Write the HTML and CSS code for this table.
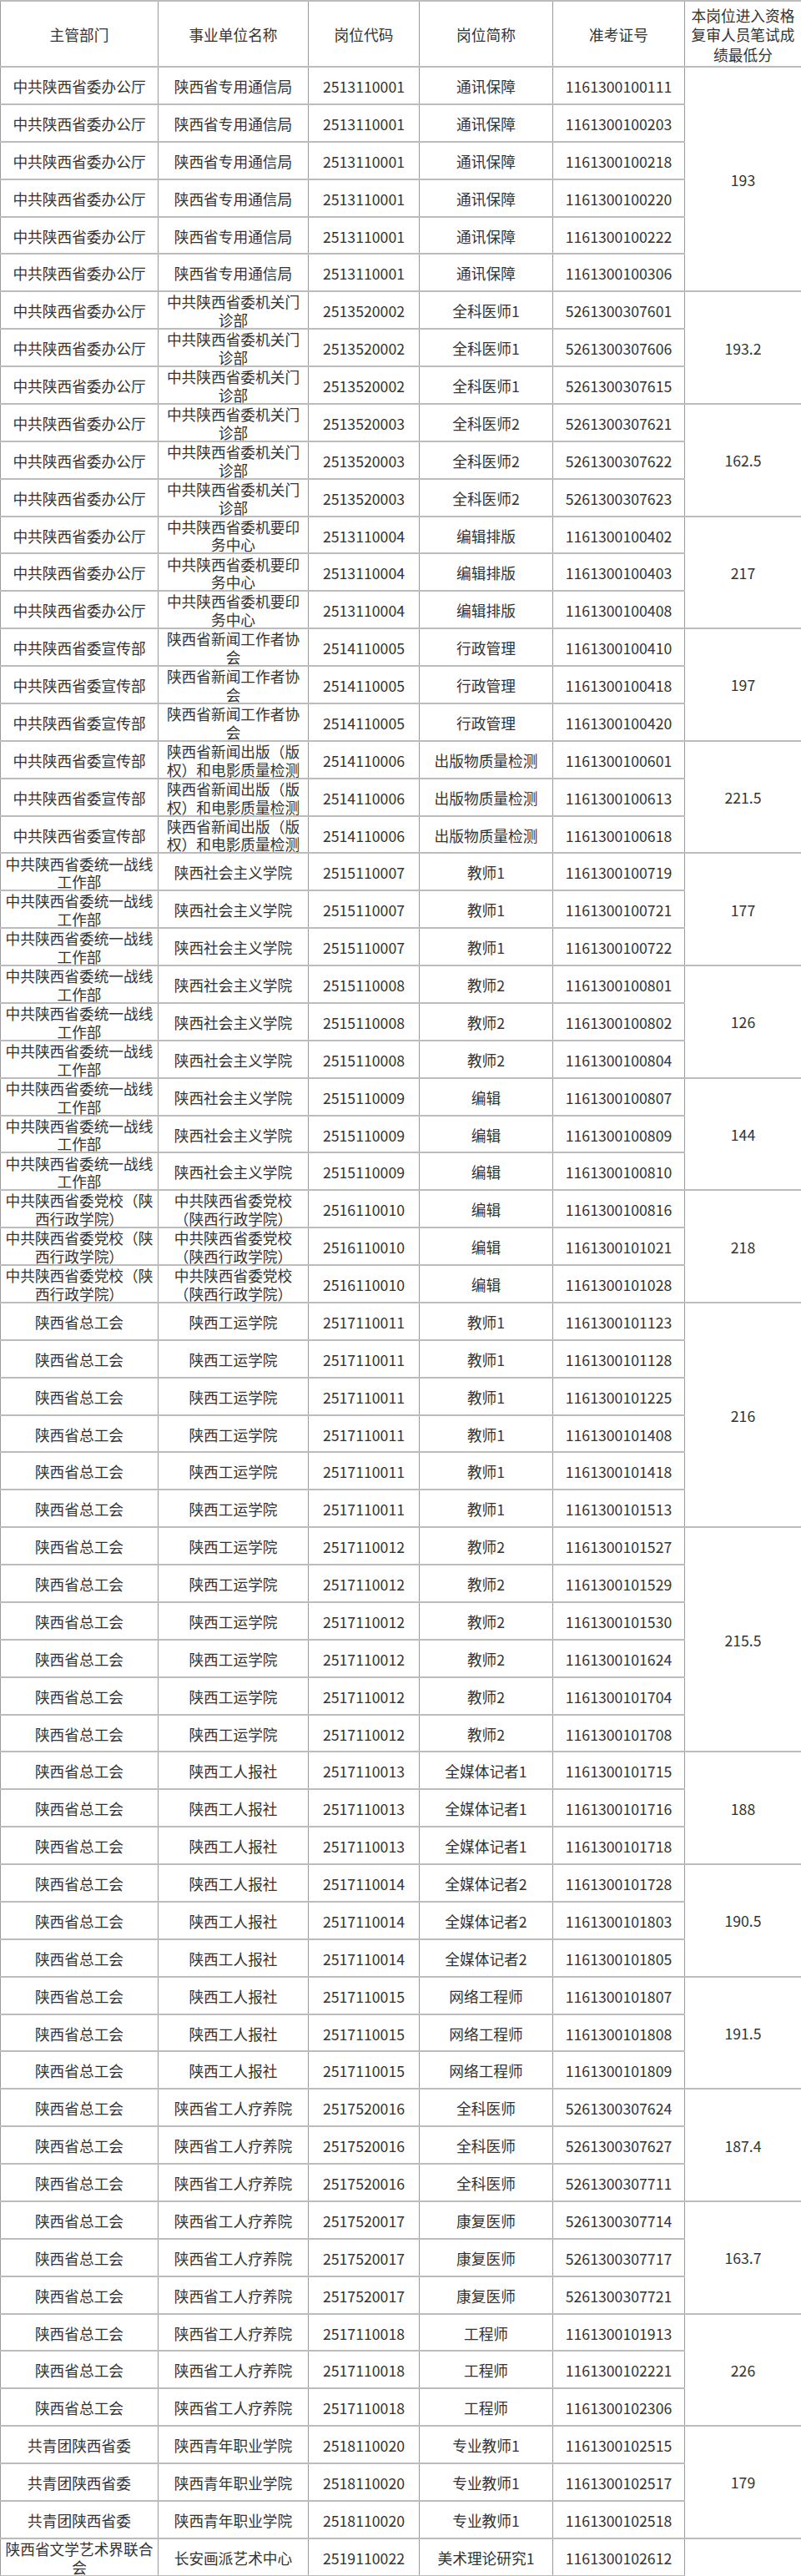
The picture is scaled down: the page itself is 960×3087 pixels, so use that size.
FILE: index.html
```html
<!DOCTYPE html>
<html lang="zh-CN">
<head>
<meta charset="utf-8">
<title>岗位进入资格复审人员笔试成绩最低分</title>
<link rel="stylesheet" href="styles.css">
</head>
<body>
<table class="grid">
<colgroup>
<col class="w1"><col class="w2"><col class="w3"><col class="w4"><col class="w5"><col class="w6">
</colgroup>
<thead>
<tr class="head">
<th><div class="cell">主管部门</div></th>
<th><div class="cell">事业单位名称</div></th>
<th><div class="cell">岗位代码</div></th>
<th><div class="cell">岗位简称</div></th>
<th><div class="cell">准考证号</div></th>
<th><div class="cell">本岗位进入资格复审人员笔试成绩最低分</div></th>
</tr>
</thead>
<tbody>
<tr><td><div class="cell">中共陕西省委办公厅</div></td><td><div class="cell">陕西省专用通信局</div></td><td><div class="cell">2513110001</div></td><td><div class="cell">通讯保障</div></td><td><div class="cell">1161300100111</div></td><td class="score" rowspan="6">193</td></tr>
<tr><td><div class="cell">中共陕西省委办公厅</div></td><td><div class="cell">陕西省专用通信局</div></td><td><div class="cell">2513110001</div></td><td><div class="cell">通讯保障</div></td><td><div class="cell">1161300100203</div></td></tr>
<tr><td><div class="cell">中共陕西省委办公厅</div></td><td><div class="cell">陕西省专用通信局</div></td><td><div class="cell">2513110001</div></td><td><div class="cell">通讯保障</div></td><td><div class="cell">1161300100218</div></td></tr>
<tr><td><div class="cell">中共陕西省委办公厅</div></td><td><div class="cell">陕西省专用通信局</div></td><td><div class="cell">2513110001</div></td><td><div class="cell">通讯保障</div></td><td><div class="cell">1161300100220</div></td></tr>
<tr><td><div class="cell">中共陕西省委办公厅</div></td><td><div class="cell">陕西省专用通信局</div></td><td><div class="cell">2513110001</div></td><td><div class="cell">通讯保障</div></td><td><div class="cell">1161300100222</div></td></tr>
<tr><td><div class="cell">中共陕西省委办公厅</div></td><td><div class="cell">陕西省专用通信局</div></td><td><div class="cell">2513110001</div></td><td><div class="cell">通讯保障</div></td><td><div class="cell">1161300100306</div></td></tr>

<tr><td><div class="cell">中共陕西省委办公厅</div></td><td><div class="cell">中共陕西省委机关门诊部</div></td><td><div class="cell">2513520002</div></td><td><div class="cell">全科医师1</div></td><td><div class="cell">5261300307601</div></td><td class="score" rowspan="3">193.2</td></tr>
<tr><td><div class="cell">中共陕西省委办公厅</div></td><td><div class="cell">中共陕西省委机关门诊部</div></td><td><div class="cell">2513520002</div></td><td><div class="cell">全科医师1</div></td><td><div class="cell">5261300307606</div></td></tr>
<tr><td><div class="cell">中共陕西省委办公厅</div></td><td><div class="cell">中共陕西省委机关门诊部</div></td><td><div class="cell">2513520002</div></td><td><div class="cell">全科医师1</div></td><td><div class="cell">5261300307615</div></td></tr>

<tr><td><div class="cell">中共陕西省委办公厅</div></td><td><div class="cell">中共陕西省委机关门诊部</div></td><td><div class="cell">2513520003</div></td><td><div class="cell">全科医师2</div></td><td><div class="cell">5261300307621</div></td><td class="score" rowspan="3">162.5</td></tr>
<tr><td><div class="cell">中共陕西省委办公厅</div></td><td><div class="cell">中共陕西省委机关门诊部</div></td><td><div class="cell">2513520003</div></td><td><div class="cell">全科医师2</div></td><td><div class="cell">5261300307622</div></td></tr>
<tr><td><div class="cell">中共陕西省委办公厅</div></td><td><div class="cell">中共陕西省委机关门诊部</div></td><td><div class="cell">2513520003</div></td><td><div class="cell">全科医师2</div></td><td><div class="cell">5261300307623</div></td></tr>

<tr><td><div class="cell">中共陕西省委办公厅</div></td><td><div class="cell">中共陕西省委机要印务中心</div></td><td><div class="cell">2513110004</div></td><td><div class="cell">编辑排版</div></td><td><div class="cell">1161300100402</div></td><td class="score" rowspan="3">217</td></tr>
<tr><td><div class="cell">中共陕西省委办公厅</div></td><td><div class="cell">中共陕西省委机要印务中心</div></td><td><div class="cell">2513110004</div></td><td><div class="cell">编辑排版</div></td><td><div class="cell">1161300100403</div></td></tr>
<tr><td><div class="cell">中共陕西省委办公厅</div></td><td><div class="cell">中共陕西省委机要印务中心</div></td><td><div class="cell">2513110004</div></td><td><div class="cell">编辑排版</div></td><td><div class="cell">1161300100408</div></td></tr>

<tr><td><div class="cell">中共陕西省委宣传部</div></td><td><div class="cell">陕西省新闻工作者协会</div></td><td><div class="cell">2514110005</div></td><td><div class="cell">行政管理</div></td><td><div class="cell">1161300100410</div></td><td class="score" rowspan="3">197</td></tr>
<tr><td><div class="cell">中共陕西省委宣传部</div></td><td><div class="cell">陕西省新闻工作者协会</div></td><td><div class="cell">2514110005</div></td><td><div class="cell">行政管理</div></td><td><div class="cell">1161300100418</div></td></tr>
<tr><td><div class="cell">中共陕西省委宣传部</div></td><td><div class="cell">陕西省新闻工作者协会</div></td><td><div class="cell">2514110005</div></td><td><div class="cell">行政管理</div></td><td><div class="cell">1161300100420</div></td></tr>

<tr><td><div class="cell">中共陕西省委宣传部</div></td><td><div class="cell">陕西省新闻出版（版权）和电影质量检测</div></td><td><div class="cell">2514110006</div></td><td><div class="cell">出版物质量检测</div></td><td><div class="cell">1161300100601</div></td><td class="score" rowspan="3">221.5</td></tr>
<tr><td><div class="cell">中共陕西省委宣传部</div></td><td><div class="cell">陕西省新闻出版（版权）和电影质量检测</div></td><td><div class="cell">2514110006</div></td><td><div class="cell">出版物质量检测</div></td><td><div class="cell">1161300100613</div></td></tr>
<tr><td><div class="cell">中共陕西省委宣传部</div></td><td><div class="cell">陕西省新闻出版（版权）和电影质量检测</div></td><td><div class="cell">2514110006</div></td><td><div class="cell">出版物质量检测</div></td><td><div class="cell">1161300100618</div></td></tr>

<tr><td><div class="cell">中共陕西省委统一战线工作部</div></td><td><div class="cell">陕西社会主义学院</div></td><td><div class="cell">2515110007</div></td><td><div class="cell">教师1</div></td><td><div class="cell">1161300100719</div></td><td class="score" rowspan="3">177</td></tr>
<tr><td><div class="cell">中共陕西省委统一战线工作部</div></td><td><div class="cell">陕西社会主义学院</div></td><td><div class="cell">2515110007</div></td><td><div class="cell">教师1</div></td><td><div class="cell">1161300100721</div></td></tr>
<tr><td><div class="cell">中共陕西省委统一战线工作部</div></td><td><div class="cell">陕西社会主义学院</div></td><td><div class="cell">2515110007</div></td><td><div class="cell">教师1</div></td><td><div class="cell">1161300100722</div></td></tr>

<tr><td><div class="cell">中共陕西省委统一战线工作部</div></td><td><div class="cell">陕西社会主义学院</div></td><td><div class="cell">2515110008</div></td><td><div class="cell">教师2</div></td><td><div class="cell">1161300100801</div></td><td class="score" rowspan="3">126</td></tr>
<tr><td><div class="cell">中共陕西省委统一战线工作部</div></td><td><div class="cell">陕西社会主义学院</div></td><td><div class="cell">2515110008</div></td><td><div class="cell">教师2</div></td><td><div class="cell">1161300100802</div></td></tr>
<tr><td><div class="cell">中共陕西省委统一战线工作部</div></td><td><div class="cell">陕西社会主义学院</div></td><td><div class="cell">2515110008</div></td><td><div class="cell">教师2</div></td><td><div class="cell">1161300100804</div></td></tr>

<tr><td><div class="cell">中共陕西省委统一战线工作部</div></td><td><div class="cell">陕西社会主义学院</div></td><td><div class="cell">2515110009</div></td><td><div class="cell">编辑</div></td><td><div class="cell">1161300100807</div></td><td class="score" rowspan="3">144</td></tr>
<tr><td><div class="cell">中共陕西省委统一战线工作部</div></td><td><div class="cell">陕西社会主义学院</div></td><td><div class="cell">2515110009</div></td><td><div class="cell">编辑</div></td><td><div class="cell">1161300100809</div></td></tr>
<tr><td><div class="cell">中共陕西省委统一战线工作部</div></td><td><div class="cell">陕西社会主义学院</div></td><td><div class="cell">2515110009</div></td><td><div class="cell">编辑</div></td><td><div class="cell">1161300100810</div></td></tr>

<tr><td><div class="cell">中共陕西省委党校（陕西行政学院）</div></td><td><div class="cell">中共陕西省委党校（陕西行政学院）</div></td><td><div class="cell">2516110010</div></td><td><div class="cell">编辑</div></td><td><div class="cell">1161300100816</div></td><td class="score" rowspan="3">218</td></tr>
<tr><td><div class="cell">中共陕西省委党校（陕西行政学院）</div></td><td><div class="cell">中共陕西省委党校（陕西行政学院）</div></td><td><div class="cell">2516110010</div></td><td><div class="cell">编辑</div></td><td><div class="cell">1161300101021</div></td></tr>
<tr><td><div class="cell">中共陕西省委党校（陕西行政学院）</div></td><td><div class="cell">中共陕西省委党校（陕西行政学院）</div></td><td><div class="cell">2516110010</div></td><td><div class="cell">编辑</div></td><td><div class="cell">1161300101028</div></td></tr>

<tr><td><div class="cell">陕西省总工会</div></td><td><div class="cell">陕西工运学院</div></td><td><div class="cell">2517110011</div></td><td><div class="cell">教师1</div></td><td><div class="cell">1161300101123</div></td><td class="score" rowspan="6">216</td></tr>
<tr><td><div class="cell">陕西省总工会</div></td><td><div class="cell">陕西工运学院</div></td><td><div class="cell">2517110011</div></td><td><div class="cell">教师1</div></td><td><div class="cell">1161300101128</div></td></tr>
<tr><td><div class="cell">陕西省总工会</div></td><td><div class="cell">陕西工运学院</div></td><td><div class="cell">2517110011</div></td><td><div class="cell">教师1</div></td><td><div class="cell">1161300101225</div></td></tr>
<tr><td><div class="cell">陕西省总工会</div></td><td><div class="cell">陕西工运学院</div></td><td><div class="cell">2517110011</div></td><td><div class="cell">教师1</div></td><td><div class="cell">1161300101408</div></td></tr>
<tr><td><div class="cell">陕西省总工会</div></td><td><div class="cell">陕西工运学院</div></td><td><div class="cell">2517110011</div></td><td><div class="cell">教师1</div></td><td><div class="cell">1161300101418</div></td></tr>
<tr><td><div class="cell">陕西省总工会</div></td><td><div class="cell">陕西工运学院</div></td><td><div class="cell">2517110011</div></td><td><div class="cell">教师1</div></td><td><div class="cell">1161300101513</div></td></tr>

<tr><td><div class="cell">陕西省总工会</div></td><td><div class="cell">陕西工运学院</div></td><td><div class="cell">2517110012</div></td><td><div class="cell">教师2</div></td><td><div class="cell">1161300101527</div></td><td class="score" rowspan="6">215.5</td></tr>
<tr><td><div class="cell">陕西省总工会</div></td><td><div class="cell">陕西工运学院</div></td><td><div class="cell">2517110012</div></td><td><div class="cell">教师2</div></td><td><div class="cell">1161300101529</div></td></tr>
<tr><td><div class="cell">陕西省总工会</div></td><td><div class="cell">陕西工运学院</div></td><td><div class="cell">2517110012</div></td><td><div class="cell">教师2</div></td><td><div class="cell">1161300101530</div></td></tr>
<tr><td><div class="cell">陕西省总工会</div></td><td><div class="cell">陕西工运学院</div></td><td><div class="cell">2517110012</div></td><td><div class="cell">教师2</div></td><td><div class="cell">1161300101624</div></td></tr>
<tr><td><div class="cell">陕西省总工会</div></td><td><div class="cell">陕西工运学院</div></td><td><div class="cell">2517110012</div></td><td><div class="cell">教师2</div></td><td><div class="cell">1161300101704</div></td></tr>
<tr><td><div class="cell">陕西省总工会</div></td><td><div class="cell">陕西工运学院</div></td><td><div class="cell">2517110012</div></td><td><div class="cell">教师2</div></td><td><div class="cell">1161300101708</div></td></tr>

<tr><td><div class="cell">陕西省总工会</div></td><td><div class="cell">陕西工人报社</div></td><td><div class="cell">2517110013</div></td><td><div class="cell">全媒体记者1</div></td><td><div class="cell">1161300101715</div></td><td class="score" rowspan="3">188</td></tr>
<tr><td><div class="cell">陕西省总工会</div></td><td><div class="cell">陕西工人报社</div></td><td><div class="cell">2517110013</div></td><td><div class="cell">全媒体记者1</div></td><td><div class="cell">1161300101716</div></td></tr>
<tr><td><div class="cell">陕西省总工会</div></td><td><div class="cell">陕西工人报社</div></td><td><div class="cell">2517110013</div></td><td><div class="cell">全媒体记者1</div></td><td><div class="cell">1161300101718</div></td></tr>

<tr><td><div class="cell">陕西省总工会</div></td><td><div class="cell">陕西工人报社</div></td><td><div class="cell">2517110014</div></td><td><div class="cell">全媒体记者2</div></td><td><div class="cell">1161300101728</div></td><td class="score" rowspan="3">190.5</td></tr>
<tr><td><div class="cell">陕西省总工会</div></td><td><div class="cell">陕西工人报社</div></td><td><div class="cell">2517110014</div></td><td><div class="cell">全媒体记者2</div></td><td><div class="cell">1161300101803</div></td></tr>
<tr><td><div class="cell">陕西省总工会</div></td><td><div class="cell">陕西工人报社</div></td><td><div class="cell">2517110014</div></td><td><div class="cell">全媒体记者2</div></td><td><div class="cell">1161300101805</div></td></tr>

<tr><td><div class="cell">陕西省总工会</div></td><td><div class="cell">陕西工人报社</div></td><td><div class="cell">2517110015</div></td><td><div class="cell">网络工程师</div></td><td><div class="cell">1161300101807</div></td><td class="score" rowspan="3">191.5</td></tr>
<tr><td><div class="cell">陕西省总工会</div></td><td><div class="cell">陕西工人报社</div></td><td><div class="cell">2517110015</div></td><td><div class="cell">网络工程师</div></td><td><div class="cell">1161300101808</div></td></tr>
<tr><td><div class="cell">陕西省总工会</div></td><td><div class="cell">陕西工人报社</div></td><td><div class="cell">2517110015</div></td><td><div class="cell">网络工程师</div></td><td><div class="cell">1161300101809</div></td></tr>

<tr><td><div class="cell">陕西省总工会</div></td><td><div class="cell">陕西省工人疗养院</div></td><td><div class="cell">2517520016</div></td><td><div class="cell">全科医师</div></td><td><div class="cell">5261300307624</div></td><td class="score" rowspan="3">187.4</td></tr>
<tr><td><div class="cell">陕西省总工会</div></td><td><div class="cell">陕西省工人疗养院</div></td><td><div class="cell">2517520016</div></td><td><div class="cell">全科医师</div></td><td><div class="cell">5261300307627</div></td></tr>
<tr><td><div class="cell">陕西省总工会</div></td><td><div class="cell">陕西省工人疗养院</div></td><td><div class="cell">2517520016</div></td><td><div class="cell">全科医师</div></td><td><div class="cell">5261300307711</div></td></tr>

<tr><td><div class="cell">陕西省总工会</div></td><td><div class="cell">陕西省工人疗养院</div></td><td><div class="cell">2517520017</div></td><td><div class="cell">康复医师</div></td><td><div class="cell">5261300307714</div></td><td class="score" rowspan="3">163.7</td></tr>
<tr><td><div class="cell">陕西省总工会</div></td><td><div class="cell">陕西省工人疗养院</div></td><td><div class="cell">2517520017</div></td><td><div class="cell">康复医师</div></td><td><div class="cell">5261300307717</div></td></tr>
<tr><td><div class="cell">陕西省总工会</div></td><td><div class="cell">陕西省工人疗养院</div></td><td><div class="cell">2517520017</div></td><td><div class="cell">康复医师</div></td><td><div class="cell">5261300307721</div></td></tr>

<tr><td><div class="cell">陕西省总工会</div></td><td><div class="cell">陕西省工人疗养院</div></td><td><div class="cell">2517110018</div></td><td><div class="cell">工程师</div></td><td><div class="cell">1161300101913</div></td><td class="score" rowspan="3">226</td></tr>
<tr><td><div class="cell">陕西省总工会</div></td><td><div class="cell">陕西省工人疗养院</div></td><td><div class="cell">2517110018</div></td><td><div class="cell">工程师</div></td><td><div class="cell">1161300102221</div></td></tr>
<tr><td><div class="cell">陕西省总工会</div></td><td><div class="cell">陕西省工人疗养院</div></td><td><div class="cell">2517110018</div></td><td><div class="cell">工程师</div></td><td><div class="cell">1161300102306</div></td></tr>

<tr><td><div class="cell">共青团陕西省委</div></td><td><div class="cell">陕西青年职业学院</div></td><td><div class="cell">2518110020</div></td><td><div class="cell">专业教师1</div></td><td><div class="cell">1161300102515</div></td><td class="score" rowspan="3">179</td></tr>
<tr><td><div class="cell">共青团陕西省委</div></td><td><div class="cell">陕西青年职业学院</div></td><td><div class="cell">2518110020</div></td><td><div class="cell">专业教师1</div></td><td><div class="cell">1161300102517</div></td></tr>
<tr><td><div class="cell">共青团陕西省委</div></td><td><div class="cell">陕西青年职业学院</div></td><td><div class="cell">2518110020</div></td><td><div class="cell">专业教师1</div></td><td><div class="cell">1161300102518</div></td></tr>

<tr><td><div class="cell">陕西省文学艺术界联合会</div></td><td><div class="cell">长安画派艺术中心</div></td><td><div class="cell">2519110022</div></td><td><div class="cell">美术理论研究1</div></td><td><div class="cell">1161300102612</div></td><td class="score open"></td></tr>
</tbody>
</table>
</body>
</html>
```

FILE: styles.css
```css
html, body {
  margin: 0;
  padding: 0;
  background: #fff;
}

body {
  font-family: "Noto Sans CJK SC", "Noto Sans", sans-serif;
  font-size: 17.7px;
  color: #333;
}

.grid {
  width: 960px;
  border-collapse: collapse;
  table-layout: fixed;
}

.w1 { width: 189px; }
.w2 { width: 180px; }
.w3 { width: 133px; }
.w4 { width: 160px; }
.w5 { width: 158px; }
.w6 { width: 140px; }

.grid th,
.grid td {
  padding: 0;
  border-left: 1px solid #9a9a9a;
  border-right: 1px solid #9a9a9a;
  border-top: 2px solid #bcbcbc;
  border-bottom: 2px solid #bcbcbc;
  text-align: center;
  vertical-align: middle;
  font-weight: 400;
}

.grid thead tr {
  height: 79px;
}

.grid tbody tr {
  height: 44.88px;
}

.cell {
  height: 42px;
  box-sizing: border-box;
  padding: 3px 2px 0;
  display: flex;
  align-items: center;
  justify-content: center;
  text-align: center;
  line-height: 21.7px;
}

.head .cell {
  height: 77px;
  line-height: 23.3px;
}

.score {
  padding-top: 3px;
}

.grid td.open {
  border-bottom-style: none;
}
```
